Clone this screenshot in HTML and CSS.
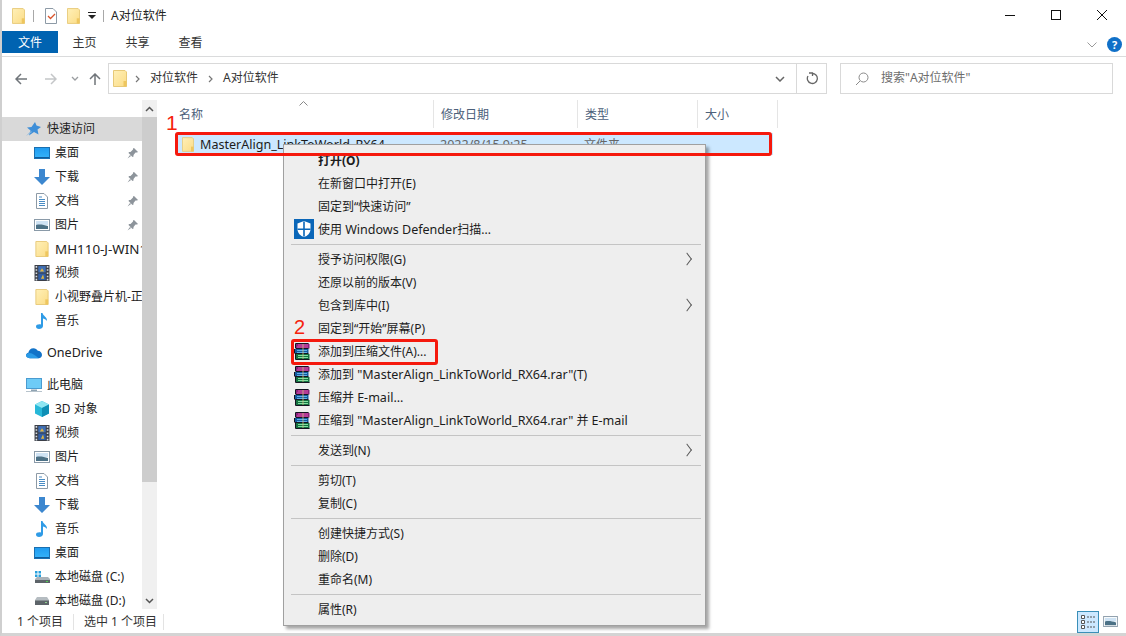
FILE: index.html
```html
<!DOCTYPE html>
<html lang="zh-CN">
<head>
<meta charset="utf-8">
<title>A对位软件</title>
<link rel="stylesheet" href="styles.css">
</head>
<body>
<svg class="defs" width="0" height="0" aria-hidden="true">
  <defs>
    <linearGradient id="fg" x1="0" y1="0" x2="1" y2="1"><stop offset="0" stop-color="#fff0b8"/><stop offset="1" stop-color="#fbdc86"/></linearGradient>
    <linearGradient id="dk" x1="0" y1="0" x2="0" y2="1"><stop offset="0" stop-color="#1f9bf0"/><stop offset="1" stop-color="#36b4fa"/></linearGradient>
    <symbol id="i-folder" viewBox="0 0 14 17"><path d="M.5.5h11.500l1.500 1.500v14.500h-13z" fill="url(#fg)" stroke="#e7c978"/><path d="M10.500 11h3v5.500h-3z" fill="#eec65e"/></symbol>
    <symbol id="i-desktop" viewBox="0 0 16 12"><rect x=".5" y=".5" width="15" height="11" fill="url(#dk)" stroke="#1a6fb0"/><path d="M1 10.500h14" stroke="#0f5c9c"/></symbol>
    <symbol id="i-down" viewBox="0 0 16 16"><path d="M5 0h6v8h5l-8 8-8-8h5z" fill="#3c87cf"/></symbol>
    <symbol id="i-doc" viewBox="0 0 12 16"><path d="M.5.5h7.500l3.500 3.500v11.500h-11z" fill="#fff" stroke="#8d9aa6"/><path d="M3 4h3M3 6.500h6M3 8.500h6M3 10.500h6M3 12.500h6" stroke="#4a8cc4"/></symbol>
    <symbol id="i-pic" viewBox="0 0 16 12"><rect x=".5" y=".5" width="15" height="11" fill="#fff" stroke="#8a9aa8"/><rect x="2" y="2" width="12" height="4" fill="#cfe3f4"/><path d="M2 6c4-1 8 0 12 1v3H2z" fill="#4c7186"/></symbol>
    <symbol id="i-video" viewBox="0 0 14 15"><rect width="14" height="15" fill="#3b3f48"/><path d="M1 1h1.500v1.500H1zM1 4h1.500v1.500H1zM1 7h1.500v1.500H1zM1 10h1.500v1.500H1zM1 13h1.500v1.500H1zM11.500 1H13v1.500h-1.500zM11.500 4H13v1.500h-1.500zM11.500 7H13v1.500h-1.500zM11.500 10H13v1.500h-1.500zM11.500 13H13v1.500h-1.500z" fill="#d8dde2"/><rect x="3.500" y="1" width="7" height="6" fill="#3f6fb5"/><rect x="3.500" y="8" width="7" height="6" fill="#2f5ea8"/><path d="M5 6l2-3 2 3zM6 13l2-4 1 4z" fill="#e0b640"/></symbol>
    <symbol id="i-music" viewBox="0 0 12 16"><path d="M5 0h1.500c.5 3 5 4 4.500 8-1-1.500-3-2.500-4-2.500V13c0 2-2 3-4 3S0 15 0 13.500 2 11 5 11.500z" fill="#2f9be6"/></symbol>
    <symbol id="i-pin" viewBox="0 0 12 12"><path d="M7 1l4 4-1 .5-1.500 0L6.500 8l0 1.500-1 .5-4-4 .5-1 1.500 0L6 2.500l0-1zM3 8l-2.500 3.500L4 9z" fill="#8d949b"/></symbol>
    <symbol id="i-star" viewBox="0 0 16 14"><path d="M9 0l1.500 3.500L15 5l-3.500 2.500 1 5L8 10l-5 3.500 1.500-5L1 5.500l4.500-.5z" fill="#3f8fd8"/><path d="M0 14l5-5 1 1z" fill="#7fb4e0"/></symbol>
    <symbol id="i-cloud" viewBox="0 0 17 12"><path d="M4 11.500C1.500 11.500 0 10 0 8.500 0 7 1 6 2.500 5.700 3 3 5 1 8 1c2 0 3.500 1 4.500 2.700 2.500 0 4.500 2 4.500 4.300 0 2-1.500 3.500-3.500 3.500z" fill="#1273c8"/><path d="M4 11.500C1.500 11.500 0 10 0 8.500 0 7 1.500 6 4 6c3 0 6 3 9.500 5.500z" fill="#2a9ae6"/></symbol>
    <symbol id="i-pc" viewBox="0 0 16 14"><rect x=".5" y=".5" width="15" height="10" fill="#6ecbf7" stroke="#4a9bd0"/><path d="M5 12.500h6" stroke="#8fa3b2" stroke-width="2"/><path d="M0 13.500h16" stroke="#b7c3cc"/></symbol>
    <symbol id="i-3d" viewBox="0 0 16 16"><path d="M8 0l7 3.500v9L8 16l-7-3.500v-9z" fill="#27b8d8"/><path d="M8 0l7 3.500L8 7 1 3.500z" fill="#8fe6f2"/><path d="M8 7l7-3.500v9L8 16z" fill="#0f8fb5"/></symbol>
    <symbol id="i-sys" viewBox="0 0 16 14"><path d="M1 1h2.500v2.500H1zM4.500 1H7v2.500H4.500zM1 4.500h2.500V7H1zM4.500 4.500H7V7H4.500z" fill="#28a0dc"/><path d="M1 9l2-2h11l2 2v4H1z" fill="#aab2b8"/><rect x="1" y="10" width="15" height="3" fill="#5d6469"/><path d="M12 11.500h2" stroke="#4fd04f"/></symbol>
    <symbol id="i-disk" viewBox="0 0 16 8"><path d="M1 3l2-3h10l2 3v5H1z" fill="#b5bcc1"/><rect x="1" y="3.500" width="14" height="4.500" fill="#5d6469"/><path d="M11 5.500h2" stroke="#8fd08f"/></symbol>
    <symbol id="i-rar" viewBox="0 0 16 17"><path d="M2 .5h12.500l1 1v4H2z" fill="#8a1f7a"/><path d="M4 2h10M3 4h11" stroke="#e05ab0"/><path d="M1 6h13.500v4.500H1z" fill="#145a9c"/><path d="M3 7.500h10M3 9.500h10" stroke="#5fb0e8"/><path d="M2 11h13.500v5.500H2z" fill="#14703f"/><path d="M4 12.500h10M4 14.500h10" stroke="#7fe0a0"/><path d="M1.500.5h13M1.500.5v5M2 5.500h12.500M.5 6v4.500M1 10.500h13.500M1.500 11v5.500h14" stroke="#141420" fill="none"/><path d="M8 1h2v15H8z" fill="#cdbb85" opacity=".4"/></symbol>
    <symbol id="i-shield" viewBox="0 0 20 20"><rect width="20" height="20" fill="#0a66b8"/><path d="M10 2l6.500 2.500V10c0 4-3 7-6.500 8-3.500-1-6.500-4-6.500-8V4.500z" fill="#fff"/><path d="M9.200 2.500h1.600v15H9.200zM3.500 9.500h13v1.600h-13z" fill="#0a66b8"/></symbol>
  </defs>
</svg>

<div class="window">
  <header class="titlebar">
    <svg class="ico-folder"><use href="#i-folder"/></svg>
    <span class="qsep"></span>
    <svg class="ico-check" viewBox="0 0 12 16"><path d="M.5.5h7.500l3.500 3.500v11.500h-11z" fill="#fff" stroke="#8d9aa6"/><path d="M3 8l2.500 2.500L10 6" fill="none" stroke="#d9542c" stroke-width="1.300"/></svg>
    <svg class="ico-folder q2"><use href="#i-folder"/></svg>
    <svg class="qdrop" viewBox="0 0 8 7"><path d="M0 0h8v1H0zM0 3h8L4 7z" fill="#222"/></svg>
    <span class="qsep q3"></span>
    <span class="wintitle">A对位软件</span>
    <div class="winbtns">
      <svg class="wb" viewBox="0 0 46 30"><path d="M18 15.500h10" stroke="#111"/></svg>
      <svg class="wb" viewBox="0 0 46 30"><rect x="18.500" y="10.500" width="9" height="9" fill="none" stroke="#111"/></svg>
      <svg class="wb" viewBox="0 0 46 30"><path d="M18 10l10 10M28 10L18 20" stroke="#111" fill="none"/></svg>
    </div>
  </header>

  <nav class="ribbon">
    <span class="tab file">文件</span>
    <span class="tab">主页</span>
    <span class="tab">共享</span>
    <span class="tab">查看</span>
    <svg class="rcollapse" viewBox="0 0 10 6"><path d="M.5.500L5 5 9.500.5" fill="none" stroke="#9a9a9a"/></svg>
    <span class="help">?</span>
  </nav>

  <div class="navbar">
    <svg class="nv n-back" viewBox="0 0 12 12"><path d="M12 6H1.500M6 1L1 6l5 5" fill="none" stroke="#70757a" stroke-width="1.500"/></svg>
    <svg class="nv n-fwd" viewBox="0 0 12 12"><path d="M0 6h10.500M6 1l5 5-5 5" fill="none" stroke="#c4c6c8" stroke-width="1.500"/></svg>
    <svg class="n-drop" viewBox="0 0 8 5"><path d="M1 1l3 3 3-3" fill="none" stroke="#9a9da0" stroke-width="1.300"/></svg>
    <svg class="nv n-up" viewBox="0 0 12 12"><path d="M6 12V1.500M1 6l5-5 5 5" fill="none" stroke="#70757a" stroke-width="1.500"/></svg>
    <div class="address">
      <svg class="ico-addr"><use href="#i-folder"/></svg>
      <svg class="crumb c1" viewBox="0 0 5 8"><path d="M1 1l3 3-3 3" fill="none" stroke="#777" stroke-width="1.200"/></svg>
      <span class="ctext">对位软件</span>
      <svg class="crumb c2" viewBox="0 0 5 8"><path d="M1 1l3 3-3 3" fill="none" stroke="#777" stroke-width="1.200"/></svg>
      <span class="ctext">A对位软件</span>
      <svg class="a-drop" viewBox="0 0 10 6"><path d="M1 1l4 4 4-4" fill="none" stroke="#666" stroke-width="1.500"/></svg>
      <span class="a-refresh"><svg viewBox="0 0 12 13" width="12" height="13"><path d="M3 1h3.500v3M6 1.500A5 5 0 1 1 2 4" fill="none" stroke="#666" stroke-width="1.300"/></svg></span>
    </div>
    <div class="search">
      <svg class="s-ico" viewBox="0 0 14 14"><circle cx="8.500" cy="5.500" r="4.500" fill="none" stroke="#8a8a8a"/><path d="M5 9l-4 4" stroke="#8a8a8a"/></svg>
      <span class="ctext stext">搜索"A对位软件"</span>
    </div>
  </div>

  <main class="main">
    <aside class="sidebar">
      <div class="tree">
        <div class="row top hot"><svg class="ti"><use href="#i-star"/></svg><span>快速访问</span></div>
        <div class="row"><svg class="ti"><use href="#i-desktop"/></svg><span>桌面</span><svg class="pin"><use href="#i-pin"/></svg></div>
        <div class="row"><svg class="ti"><use href="#i-down"/></svg><span>下载</span><svg class="pin"><use href="#i-pin"/></svg></div>
        <div class="row"><svg class="ti"><use href="#i-doc"/></svg><span>文档</span><svg class="pin"><use href="#i-pin"/></svg></div>
        <div class="row"><svg class="ti"><use href="#i-pic"/></svg><span>图片</span><svg class="pin"><use href="#i-pin"/></svg></div>
        <div class="row"><svg class="ti"><use href="#i-folder"/></svg><span class="wide">MH110-J-WIN10</span></div>
        <div class="row"><svg class="ti"><use href="#i-video"/></svg><span>视频</span></div>
        <div class="row"><svg class="ti"><use href="#i-folder"/></svg><span>小视野叠片机-正式版</span></div>
        <div class="row"><svg class="ti"><use href="#i-music"/></svg><span>音乐</span></div>
        <div class="row top group"><svg class="ti"><use href="#i-cloud"/></svg><span class="lat">OneDrive</span></div>
        <div class="row top group"><svg class="ti"><use href="#i-pc"/></svg><span>此电脑</span></div>
        <div class="row"><svg class="ti"><use href="#i-3d"/></svg><span>3D 对象</span></div>
        <div class="row"><svg class="ti"><use href="#i-video"/></svg><span>视频</span></div>
        <div class="row"><svg class="ti"><use href="#i-pic"/></svg><span>图片</span></div>
        <div class="row"><svg class="ti"><use href="#i-doc"/></svg><span>文档</span></div>
        <div class="row"><svg class="ti"><use href="#i-down"/></svg><span>下载</span></div>
        <div class="row"><svg class="ti"><use href="#i-music"/></svg><span>音乐</span></div>
        <div class="row"><svg class="ti"><use href="#i-desktop"/></svg><span>桌面</span></div>
        <div class="row"><svg class="ti"><use href="#i-sys"/></svg><span>本地磁盘 (C:)</span></div>
        <div class="row"><svg class="ti"><use href="#i-disk"/></svg><span>本地磁盘 (D:)</span></div>
      </div>
      <div class="scrollbar">
        <svg class="sb-arrow" viewBox="0 0 9 6"><path d="M1 5l3.500-3.500L8 5" fill="none" stroke="#555" stroke-width="1.500"/></svg>
        <div class="thumb"></div>
        <div class="sb-rest"></div>
        <svg class="sb-arrow" viewBox="0 0 9 6"><path d="M1 1l3.500 3.500L8 1" fill="none" stroke="#555" stroke-width="1.500"/></svg>
      </div>
    </aside>
    <section class="list">
      <div class="heads">
        <span class="head">名称<svg class="sort" viewBox="0 0 9 5"><path d="M.5 4.500L4.500.5l4 4" fill="none" stroke="#888"/></svg></span>
        <span class="head">修改日期</span>
        <span class="head">类型</span>
        <span class="head">大小</span>
      </div>
      <div class="filerow">
        <span class="fname"><svg class="ico-file"><use href="#i-folder"/></svg><span class="lat">MasterAlign_LinkToWorld_RX64</span></span>
        <span class="fcell lat">2022/8/15 9:25</span>
        <span class="fcell">文件夹</span>
      </div>
    </section>
  </main>

  <footer class="status">
    <span class="st first">1 个项目</span>
    <span class="st">选中 1 个项目</span>
    <span class="viewbtns">
      <span class="vb on"><svg viewBox="0 0 16 16" width="16" height="16"><path d="M1.500 1.500h3v3h-3zM1.500 6.500h3v3h-3zM1.500 11.500h3v3h-3z" fill="#fff" stroke="#555"/><path d="M7 3h2M10 3h2M13 3h2M7 8h2M10 8h2M13 8h2M7 13h2M10 13h2M13 13h2" stroke="#555"/></svg></span>
      <svg class="vb2"><use href="#i-pic"/></svg>
    </span>
  </footer>

  <div class="menu">
    <div class="mi strong">打开(O)</div>
    <div class="mi">在新窗口中打开(E)</div>
    <div class="mi">固定到“快速访问”</div>
    <div class="mi"><svg class="mico shield"><use href="#i-shield"/></svg>使用 <span class="lat">Windows Defender</span>扫描...</div>
    <div class="msep"></div>
    <div class="mi sub">授予访问权限(G)</div>
    <div class="mi">还原以前的版本(V)</div>
    <div class="mi sub">包含到库中(I)</div>
    <div class="mi">固定到“开始”屏幕(P)</div>
    <div class="mi"><svg class="mico"><use href="#i-rar"/></svg>添加到压缩文件(A)...</div>
    <div class="mi"><svg class="mico"><use href="#i-rar"/></svg>添加到 <span class="lat">"MasterAlign_LinkToWorld_RX64.rar"</span>(T)</div>
    <div class="mi"><svg class="mico"><use href="#i-rar"/></svg>压缩并 <span class="lat">E-mail...</span></div>
    <div class="mi"><svg class="mico"><use href="#i-rar"/></svg>压缩到 <span class="lat">"MasterAlign_LinkToWorld_RX64.rar"</span> 并 <span class="lat">E-mail</span></div>
    <div class="msep"></div>
    <div class="mi sub">发送到(N)</div>
    <div class="msep"></div>
    <div class="mi">剪切(T)</div>
    <div class="mi">复制(C)</div>
    <div class="msep"></div>
    <div class="mi">创建快捷方式(S)</div>
    <div class="mi">删除(D)</div>
    <div class="mi">重命名(M)</div>
    <div class="msep"></div>
    <div class="mi">属性(R)</div>
  </div>

  <span class="mark m1">1</span>
  <span class="mark m2">2</span>
  <div class="redbox r1"></div>
  <div class="redbox r2"></div>
</div>
</body>
</html>
```

FILE: styles.css
```css
* { box-sizing: border-box; }
html, body { margin: 0; padding: 0; }
body {
  width: 1126px;
  height: 636px;
  overflow: hidden;
  background: #fff;
  color: #1c1c1c;
  font: 12px/16px "Noto Sans", "Noto Sans CJK SC", sans-serif;
}
.defs { position: absolute; }
svg { display: block; flex: none; }
.lat { font-size: 12.55px; }
.wide { font-size: 13.4px; }

.window {
  position: relative;
  display: flex;
  flex-direction: column;
  width: 1126px;
  height: 636px;
  border-left: 2px solid #cfcfcf;
  border-bottom: 3px solid #d4d4d4;
  overflow: hidden;
}

/* title bar */
.titlebar { display: flex; align-items: center; height: 31px; padding-left: 10px; flex: none; }
.ico-folder { width: 13px; height: 16px; }
.qsep { width: 1px; height: 12px; background: #a8a8a8; margin-left: 8px; }
.ico-check { width: 12px; height: 16px; margin-left: 11px; }
.q2 { margin-left: 10px; }
.qdrop { width: 8px; height: 7px; margin-left: 8px; }
.q3 { margin-left: 7px; }
.wintitle { margin-left: 7px; padding-top: 1px; font-size: 12px; color: #222; }
.winbtns { display: flex; margin-left: auto; align-self: flex-start; padding-right: 1px; }
.wb { width: 46px; height: 30px; }

/* ribbon */
.ribbon { display: flex; height: 26px; flex: none; border-bottom: 1px solid #dadbdc; align-items: flex-start; }
.tab { display: block; width: 53px; height: 22px; line-height: 24px; text-align: center; color: #333; }
.tab.file { width: 56px; background: #0063b1; color: #fff; }
.rcollapse { width: 10px; height: 6px; margin: 11px 0 0 auto; }
.help {
  width: 15px; height: 15px; margin: 6px 4px 0 10px; border-radius: 50%;
  background: #1070c8; color: #fff; font-weight: 700; font-size: 11px; line-height: 15px; text-align: center;
}

/* address row */
.navbar { display: flex; align-items: center; height: 31px; margin-top: 6px; flex: none; }
.nv { width: 12px; height: 12px; }
.n-back { margin-left: 13px; }
.n-fwd { margin-left: 18px; }
.n-drop { width: 8px; height: 5px; margin-left: 14px; }
.n-up { margin-left: 10px; }
.address {
  display: flex; align-items: center; width: 719px; height: 31px; margin-left: 7px;
  border: 1px solid #d9d9d9; padding-left: 4px;
}
.ico-addr { width: 14px; height: 17px; }
.crumb { width: 5px; height: 8px; }
.c1 { margin: 0 10px 0 8px; }
.c2 { margin: 0 10px; }
.ctext { padding-bottom: 1px; color: #333; }
.stext { color: #6d6d6d; }
.a-drop { width: 10px; height: 6px; margin-left: auto; margin-right: 11px; }
.a-refresh { display: flex; align-items: center; justify-content: center; width: 30px; height: 29px; border-left: 1px solid #d9d9d9; }
.search {
  display: flex; align-items: center; width: 273px; height: 31px; margin-left: 13px;
  border: 1px solid #d9d9d9; padding-left: 14px;
}
.s-ico { width: 14px; height: 14px; margin-right: 12px; }

/* main */
.main { display: flex; flex: 1; min-height: 0; margin-top: 6px; }
.sidebar { display: flex; width: 155px; flex: none; overflow: hidden; }
.tree { width: 140px; flex: none; padding-top: 17px; overflow: hidden; }
.row { display: flex; align-items: center; height: 24px; padding-left: 32px; white-space: nowrap; overflow: hidden; position: relative; color: #222; }
.row.top { padding-left: 24px; }
.row.group { margin-top: 8px; }
.row.hot { background: #d9d9d9; }
.ti { width: 16px; height: 16px; margin-right: 5px; }
.pin { position: absolute; right: 3px; top: 6px; width: 12px; height: 12px; }
.scrollbar { display: flex; flex-direction: column; align-items: center; width: 15px; flex: none; background: #f0f0f0; }
.sb-arrow { width: 9px; height: 6px; margin: 6px 0 5px; flex: none; }
.thumb { width: 15px; height: 365px; background: #cdcdcd; flex: none; }
.sb-rest { flex: 1; }

.list { flex: 1; padding-left: 15px; min-width: 0; }
.heads { display: grid; grid-template-columns: 262px 144px 120px 80px; height: 28px; width: 606px; }
.head { position: relative; padding: 7px 0 0 7px; border-right: 1px solid #e5e5e5; color: #4c607a; }
.sort { position: absolute; left: 127px; top: 1px; width: 9px; height: 5px; }
.filerow { display: grid; grid-template-columns: 258px 144px 120px; align-items: center; width: 597px; height: 22px; margin: 5px 0 0 4px; padding-top: 1px; background: #cce8ff; }
.fname { display: flex; align-items: center; padding-left: 6px; white-space: nowrap; overflow: hidden; }
.ico-file { width: 12px; height: 15px; margin-right: 6px; }
.fcell { padding-left: 6px; color: #666; }

/* status */
.status { display: flex; align-items: center; height: 24px; flex: none; color: #333; padding-top: 1px; }
.st { display: block; padding: 0 0 0 10px; border-right: 1px solid #e3e3e3; height: 16px; }
.st.first { width: 72px; padding-left: 15px; }
.st + .st { width: 90px; }
.viewbtns { display: flex; align-items: center; margin-left: auto; margin-right: 8px; }
.vb { display: flex; align-items: center; justify-content: center; width: 22px; height: 22px; background: #cce8ff; border: 1px solid #3a8fb8; }
.vb2 { width: 15px; height: 11px; margin-left: 4px; }

/* context menu */
.menu {
  position: absolute; left: 281px; top: 144px; width: 423px; height: 482px;
  padding: 4px 4px 0 2px; background: #eeeeee; border: 1px solid #a0a0a0;
  box-shadow: 3px 3px 3px rgba(0,0,0,.35); color: #1c1c1c;
}
.mi { position: relative; height: 23px; line-height: 23px; padding-left: 32px; white-space: nowrap; }
.mi.strong { font-weight: 700; }
.msep { height: 1px; margin: 3px 0 3px 5px; background: #c4c4c4; }
.mico { position: absolute; left: 8px; top: 3px; width: 16px; height: 17px; }
.mico.shield { left: 8px; top: 1px; width: 20px; height: 20px; }
.mi.sub::after {
  content: ""; position: absolute; right: 10px; top: 7px; width: 7px; height: 7px;
  border-top: 1px solid #555; border-right: 1px solid #555;
  transform: rotate(45deg) skew(8deg, 8deg);
}

/* annotations */
.mark { position: absolute; color: #f5220c; font-family: "Liberation Sans", sans-serif; }
.m1 { left: 164px; top: 112px; font-size: 21px; line-height: 21px; }
.m2 { left: 292px; top: 317px; font-size: 20px; line-height: 20px; }
.redbox { position: absolute; border: 3px solid #f5190d; border-radius: 3px; }
.r1 { left: 173px; top: 132px; width: 597px; height: 24px; }
.r2 { left: 289px; top: 339px; width: 147px; height: 26px; }
```
